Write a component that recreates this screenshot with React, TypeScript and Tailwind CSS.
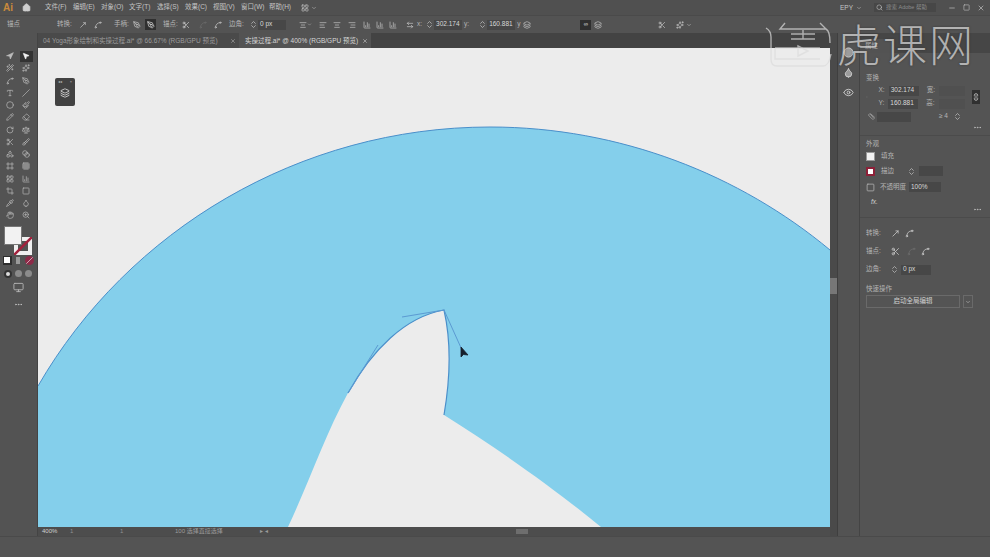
import React from 'react';
import {
  ArrowLeftRight, Brush, Circle, Crop, Droplet, Eraser, Eye, Hand, Home, Layers, LayoutGrid, Link2, Minus, MoveUpRight, MousePointer2, Navigation, PenTool, Pencil, Pipette, RotateCw, Ruler, Scale, Scissors, Search, Shapes, Slash, Spline, Square, Type, Wand2, X, ZoomIn, ChevronDown, ChevronsUpDown, AlignCenter, AlignLeft, AlignRight, BarChart3, Grid3x3, Blend, Monitor, MoreHorizontal, Sparkles, Paintbrush, Frame,
} from 'lucide-react';

const menus = ['文件(F)', '编辑(E)', '对象(O)', '文字(T)', '选择(S)', '效果(C)', '视图(V)', '窗口(W)', '帮助(H)'];

const tools = [
  Navigation, MousePointer2, Wand2, Sparkles, Spline, PenTool, Type, Slash, Circle, Paintbrush, Pencil, Eraser, RotateCw, Scale, Scissors, Brush,
  Shapes, Blend, Frame, Grid3x3, LayoutGrid, BarChart3, Crop, Square, Pipette, Droplet, Hand, ZoomIn,
];

function Lbl({ children, className = '' }: { children: React.ReactNode; className?: string }) {
  return <span className={`text-[6.5px] leading-none text-[#b5b5b5] whitespace-nowrap ${className}`}>{children}</span>;
}

function Field({ value, className = '' }: { value?: string; className?: string }) {
  return (
    <div className={`h-[10px] bg-[#474747] flex items-center px-[2px] text-[6.5px] leading-none text-[#d8d8d8] whitespace-nowrap ${className}`}>
      {value}
    </div>
  );
}

function Stepper() {
  return <ChevronsUpDown size={9} className="text-[#bdbdbd] shrink-0" />;
}

export default function App() {
  return (
    <div className="relative w-[990px] h-[557px] overflow-hidden bg-[#545454] flex flex-col font-['Liberation_Sans','Noto_Sans_CJK_SC',sans-serif]">
      {/* menu bar */}
      <div className="h-[15px] shrink-0 flex items-center bg-[#505050]">
        <span className="w-[20px] pl-[3px] text-[10px] font-bold text-[#c98a3c]">Ai</span>
        <Home size={9} className="text-[#cfcfcf] ml-[2px] mr-[14px]" fill="#cfcfcf" />
        <div className="flex gap-[9px]">
          {menus.map((m) => (
            <span key={m} className="w-[19px] text-[6.5px] leading-none text-[#c4c4c4] whitespace-nowrap">{m}</span>
          ))}
        </div>
        <LayoutGrid size={8} className="ml-[13px] text-[#c4c4c4]" />
        <ChevronDown size={6} className="ml-[2px] text-[#c4c4c4]" />
        <div className="ml-auto flex items-center">
          <span className="text-[6.5px] text-[#c4c4c4]">EPY</span>
          <ChevronDown size={6} className="ml-[3px] text-[#c4c4c4]" />
          <div className="ml-[12px] w-[62px] h-[9px] bg-[#474747] flex items-center px-[2px] gap-[3px]">
            <Search size={7} className="text-[#c4c4c4]" />
            <span className="text-[5.5px] text-[#8d8d8d] whitespace-nowrap">搜索 Adobe 帮助</span>
          </div>
          <Minus size={8} className="ml-[12px] text-[#c4c4c4]" />
          <Square size={7} className="ml-[7px] text-[#c4c4c4]" />
          <X size={8} className="ml-[7px] mr-[5px] text-[#c4c4c4]" />
        </div>
      </div>

      {/* control bar */}
      <div className="h-[18px] shrink-0 flex items-center bg-[#535353] border-t border-[#4a4a4a]">
        <Lbl className="ml-[7px] w-[50px]">锚点</Lbl>
        <Lbl className="w-[22px]">转换:</Lbl>
        <MoveUpRight size={8} className="text-[#c8c8c8] mr-[7px]" />
        <Spline size={8} className="text-[#c8c8c8] mr-[12px]" />
        <Lbl className="w-[16px]">手柄:</Lbl>
        <PenTool size={8} className="text-[#c8c8c8] ml-[3px] mr-[4px]" />
        <div className="w-[11px] h-[11px] bg-[#2f2f2f] flex items-center justify-center mr-[7px]">
          <PenTool size={8} className="text-[#e5e5e5]" />
        </div>
        <Lbl className="w-[19px]">锚点:</Lbl>
        <Scissors size={8} className="text-[#d0d0d0] mr-[9px]" />
        <Spline size={8} className="text-[#6d6d6d] mr-[7px]" />
        <Spline size={8} className="text-[#c8c8c8] mr-[7px]" />
        <Lbl className="w-[20px]">边角:</Lbl>
        <Stepper />
        <Field value="0 px" className="w-[28px]" />
        <AlignCenter size={8} className="ml-[13px] text-[#c8c8c8]" />
        <ChevronDown size={5} className="text-[#c8c8c8] mr-[7px]" />
        <AlignLeft size={8} className="text-[#c8c8c8] mr-[6px]" />
        <AlignCenter size={8} className="text-[#c8c8c8] mr-[7px]" />
        <AlignRight size={8} className="text-[#c8c8c8] mr-[7px]" />
        <BarChart3 size={8} className="text-[#c8c8c8] mr-[5px]" />
        <BarChart3 size={8} className="text-[#c8c8c8] mr-[5px]" />
        <BarChart3 size={8} className="text-[#c8c8c8] mr-[9px]" />
        <ArrowLeftRight size={8} className="text-[#c8c8c8]" />
        <Lbl className="ml-[3px] mr-[3px]">x:</Lbl>
        <Stepper />
        <Field value="302.174" className="w-[28px]" />
        <Lbl className="ml-[2px] mr-[9px]">y:</Lbl>
        <Stepper />
        <Field value="160.881" className="w-[28px]" />
        <Lbl className="ml-[2px] mr-[3px]">y</Lbl>
        <Layers size={8} className="text-[#c8c8c8]" />
        <div className="ml-[49px] w-[11px] h-[10px] bg-[#2f2f2f] flex items-center justify-center text-[6px] text-[#e5e5e5]">∞</div>
        <Layers size={8} className="ml-[3px] text-[#c8c8c8]" />
        <Scissors size={8} className="ml-[56px] text-[#c8c8c8]" />
        <Sparkles size={8} className="ml-[10px] text-[#c8c8c8]" />
        <ChevronDown size={6} className="ml-[2px] text-[#c8c8c8]" />
      </div>

      <div className="h-[504px] shrink-0 flex border-b border-[#4a4a4a]">
        {/* toolbar */}
        <div className="w-[38px] shrink-0 flex flex-col items-center pt-[17px] pr-px border-r border-[#444] bg-[#535353]">
          <div className="grid grid-cols-2 w-[32px] auto-rows-[12.25px] mb-[4px] items-center justify-items-center shrink-0">
            {tools.map((T, i) => (
              <div key={i} className={`w-[13px] h-[11px] flex items-center justify-center ${i === 1 ? 'bg-[#333]' : ''}`}>
                <T size={8} className={i === 1 ? 'text-[#f0f0f0]' : 'text-[#bcbcbc]'} fill={i < 2 ? 'currentColor' : 'none'} />
              </div>
            ))}
          </div>
          {/* fill and stroke */}
          <div className="relative w-[28px] h-[29px] shrink-0">
            <div className="absolute right-0 bottom-0 w-[18px] h-[18px] bg-[#f0f0f0] flex items-center justify-center">
              <div className="w-[10px] h-[10px] bg-[#535353]" />
              <svg viewBox="0 0 18 18" className="absolute inset-0">
                <line x1="0" y1="18" x2="18" y2="0" stroke="#a3213c" strokeWidth="2.5" />
              </svg>
            </div>
            <div className="absolute left-0 top-0 w-[18px] h-[19px] bg-[#f2f2f2] border border-[#777]" />
          </div>
          <div className="flex gap-[2px] mt-[1px] shrink-0">
            <div className="w-[9px] h-[9px] bg-[#2d2d2d] flex items-center justify-center"><div className="w-[6px] h-[6px] bg-white" /></div>
            <div className="w-[9px] h-[9px] flex items-center justify-center"><div className="w-[4px] h-[7px] bg-[#9a9a9a]" /></div>
            <div className="w-[9px] h-[9px] rounded-full bg-[#8d2a48] flex items-center justify-center"><Slash size={7} className="text-white" /></div>
          </div>
          <div className="flex gap-[3px] mt-[5px] shrink-0">
            <div className="w-[8px] h-[8px] rounded-full bg-[#dcdcdc] border-2 border-[#333]" />
            <div className="w-[7px] h-[7px] rounded-full bg-[#8b8b8b]" />
            <div className="w-[7px] h-[7px] rounded-full bg-[#8b8b8b]" />
          </div>
          <Monitor size={11} className="mt-[4px] text-[#b5b5b5] shrink-0" />
          <MoreHorizontal size={9} className="mt-[7px] text-[#c5c5c5] shrink-0" />
        </div>

        {/* document column */}
        <div className="w-[792px] shrink-0 flex flex-col">
          {/* tabs */}
          <div className="h-[15px] shrink-0 flex items-stretch bg-[#434343]">
            <div className="w-[201px] flex items-center justify-between pl-[5px] pr-[3px] bg-[#4a4a4a]">
              <span className="text-[6.5px] text-[#9c9c9c] whitespace-nowrap">04 Yoga形象绘制和实操过程.ai* @ 66.67% (RGB/GPU 预览)</span>
              <X size={6} className="text-[#bbb]" />
            </div>
            <div className="w-[132px] flex items-center justify-between pl-[6px] pr-[3px] bg-[#535353]">
              <span className="text-[6.5px] text-[#d6d6d6] whitespace-nowrap">实操过程.ai* @ 400% (RGB/GPU 预览)</span>
              <X size={6} className="text-[#ddd]" />
            </div>
          </div>

          {/* canvas */}
          <div className="relative h-[479px] shrink-0 bg-[#ececec] overflow-hidden">
            <svg viewBox="38 48 792 479" className="w-full h-full block">
              <path
                d="M38 386 C128 230 300 127 490 127 C620 127 740 175 830 250 L830 527 L601 527 C560 493 500 450 444 415 C450 380 452 345 444 310 C405 317 372 350 348 393 C325 435 310 480 288 527 L38 527 Z"
                fill="#84cfeb"
              />
              <path d="M38 386 C128 230 300 127 490 127 C620 127 740 175 830 250" fill="none" stroke="#4a8fca" strokeWidth="1" />
              <path d="M444 415 C450 380 452 345 444 310 C405 317 372 350 348 393" fill="none" stroke="#4a8fca" strokeWidth="1.2" />
              <path d="M402 317 L444 310 L462 350 M348 393 L378 345" fill="none" stroke="#5b9ad2" strokeWidth="1" />
              <path d="M461 347 L461 357 L463.5 354.5 L468 355 Z" fill="#16202c" stroke="#16202c" strokeWidth="0.8" />
            </svg>
            {/* collapsed layers flyout */}
            <div className="absolute left-[17px] top-[30px] w-[20px] h-[28px] rounded-[2px] bg-[#424242] flex flex-col items-center pt-[2px] gap-[4px]">
              <div className="w-[14px] flex justify-between text-[4px] leading-none text-[#bbb]"><span>◂◂</span><span>×</span></div>
              <Layers size={10} className="text-[#e0e0e0]" />
            </div>
          </div>

          {/* status bar */}
          <div className="h-[9px] shrink-0 flex items-center bg-[#4d4d4d] text-[6px] text-[#b0b0b0]">
            <span className="ml-[4px] w-[28px] text-[#d0d0d0]">400%</span>
            <span className="w-[50px] text-[#8f8f8f]">1</span>
            <span className="w-[55px] text-[#8f8f8f]">1</span>
            <span className="w-[85px] text-[#9c9c9c] whitespace-nowrap">100 选择直接选择</span>
            <span className="text-[#9c9c9c]">▸ ◂</span>
            <div className="ml-[248px] w-[12px] h-[5px] bg-[#6e6e6e]" />
          </div>
        </div>

        {/* scroll strip */}
        <div className="w-[8px] shrink-0 flex flex-col bg-[#4a4a4a] border-r border-[#3f3f3f] pt-[245px]">
          <div className="h-[16px] bg-[#777]" />
        </div>

        {/* dock */}
        <div className="w-[22px] shrink-0 flex flex-col items-center gap-[9px] pt-[14px] bg-[#535353] border-r border-[#444]">
          <Circle size={11} className="text-[#cfcfcf]" fill="#9c9c9c" />
          <Droplet size={11} className="text-[#cfcfcf]" fill="#9c9c9c" />
          <Eye size={11} className="text-[#cfcfcf]" />
        </div>

        {/* properties panel */}
        <div className="flex-1 min-w-0 flex flex-col bg-[#545454]">
          <div className="h-[20px] shrink-0 flex items-end bg-[#464646]">
            <div className="h-[14px] w-[34px] flex items-center pl-[5px] bg-[#535353]"><Lbl>属性</Lbl></div>
          </div>

          <div className="flex flex-col pl-[6px] pr-[10px]">
            <Lbl className="mt-[22px] text-[#a8a8a8]">变换</Lbl>
            <div className="flex items-center mt-[4px]">
              <Minus size={8} className="text-[#d0d0d0] mr-[11px]" />
              <div className="flex flex-col gap-[3px]">
                <div className="flex items-center gap-[4px]">
                  <Lbl>X:</Lbl>
                  <Field value="302.174" className="w-[30px]" />
                  <Lbl className="ml-[4px]">宽:</Lbl>
                  <Field className="w-[26px] bg-[#505050]" />
                </div>
                <div className="flex items-center gap-[4px]">
                  <Lbl>Y:</Lbl>
                  <Field value="160.881" className="w-[30px]" />
                  <Lbl className="ml-[4px]">高:</Lbl>
                  <Field className="w-[26px] bg-[#505050]" />
                </div>
              </div>
              <div className="ml-[7px] w-[10px] h-[14px] bg-[#303030] flex items-center justify-center">
                <Link2 size={8} className="text-[#e8e8e8] rotate-90" />
              </div>
            </div>
            <div className="flex items-center mt-[3px]">
              <Ruler size={7} className="text-[#bdbdbd] ml-[2px]" />
              <Field className="ml-[2px] w-[34px] bg-[#4f4f4f]" />
              <Lbl className="ml-[28px]">≥ 4</Lbl>
              <ChevronsUpDown size={9} className="ml-[5px] text-[#bdbdbd]" />
            </div>
            <div className="flex justify-end mt-[1px] -mr-[2px]"><MoreHorizontal size={9} className="text-[#bdbdbd]" /></div>
          </div>

          <div className="h-px shrink-0 bg-[#4b4b4b] mt-[3px]" />

          <div className="flex flex-col pl-[6px] pr-[10px]">
            <Lbl className="mt-[5px] text-[#a8a8a8]">外观</Lbl>
            <div className="flex items-center mt-[5px]">
              <div className="w-[9px] h-[9px] bg-[#f2f2f2] border border-[#999]" />
              <Lbl className="ml-[6px]">填充</Lbl>
            </div>
            <div className="flex items-center mt-[5px]">
              <div className="w-[9px] h-[9px] bg-white border-[2px] border-[#8d2038]" />
              <Lbl className="ml-[6px] mr-[13px]">描边</Lbl>
              <Stepper />
              <Field className="ml-[3px] w-[24px]" />
            </div>
            <div className="flex items-center mt-[6px]">
              <Square size={9} className="text-[#b5b5b5]" />
              <Lbl className="ml-[5px]">不透明度</Lbl>
              <Field value="100%" className="ml-[3px] w-[32px]" />
            </div>
            <Lbl className="mt-[7px] ml-[5px] italic text-[#d0d0d0]">fx.</Lbl>
            <div className="flex justify-end -mt-[1px] -mr-[2px]"><MoreHorizontal size={9} className="text-[#bdbdbd]" /></div>
          </div>

          <div className="h-px shrink-0 bg-[#4b4b4b] mt-[3px]" />

          <div className="flex flex-col pl-[6px] pr-[17px]">
            <div className="flex items-center mt-[11px]">
              <Lbl className="w-[25px]">转换:</Lbl>
              <MoveUpRight size={9} className="text-[#cfcfcf] mr-[5px]" />
              <Spline size={9} className="text-[#cfcfcf]" />
            </div>
            <div className="flex items-center mt-[9px]">
              <Lbl className="w-[25px]">锚点:</Lbl>
              <Scissors size={9} className="text-[#cfcfcf] mr-[7px]" />
              <Spline size={9} className="text-[#6d6d6d] mr-[5px]" />
              <Spline size={9} className="text-[#cfcfcf]" />
            </div>
            <div className="flex items-center mt-[9px]">
              <Lbl className="w-[24px]">边角:</Lbl>
              <Stepper />
              <Field value="0 px" className="ml-[2px] w-[30px]" />
            </div>
            <Lbl className="mt-[11px] text-[#a8a8a8]">快速操作</Lbl>
            <div className="flex items-center mt-[3px] gap-[3px]">
              <div className="flex-1 h-[13px] border border-[#6a6a6a] flex items-center justify-center"><Lbl className="text-[#d0d0d0]">启动全局编辑</Lbl></div>
              <div className="w-[10px] h-[13px] border border-[#6a6a6a] flex items-center justify-center"><ChevronDown size={6} className="text-[#ccc]" /></div>
            </div>
          </div>
        </div>
      </div>

      {/* watermark */}
      <div className="absolute left-[763px] top-[21px] flex items-start gap-[3px] opacity-70 pointer-events-none">
        <svg width="71" height="48" viewBox="0 0 71 48" fill="none" stroke="#dcdcdc" strokeWidth="1.4">
          <path d="M3 7 Q8 10 8 16 V38 Q8 45 14 45 H60 Q66 45 68 33" />
          <path d="M22 2 L17 8 H63 L57 2 M63 8 Q67 10 67 22" />
          <path d="M28 13 H52 M28 18 H52 M40 9 V18" />
          <path d="M12 27 H57 M12 27 V38 H57" />
          <path d="M35 25 V35 L45 30 Z" />
        </svg>
        <span className="text-[44px] leading-none font-extralight tracking-[2px] text-[#dcdcdc] whitespace-nowrap [text-shadow:0_0_2px_#2a2a2a] font-['Noto_Sans_CJK_SC',sans-serif]">虎课网</span>
      </div>
    </div>
  );
}
